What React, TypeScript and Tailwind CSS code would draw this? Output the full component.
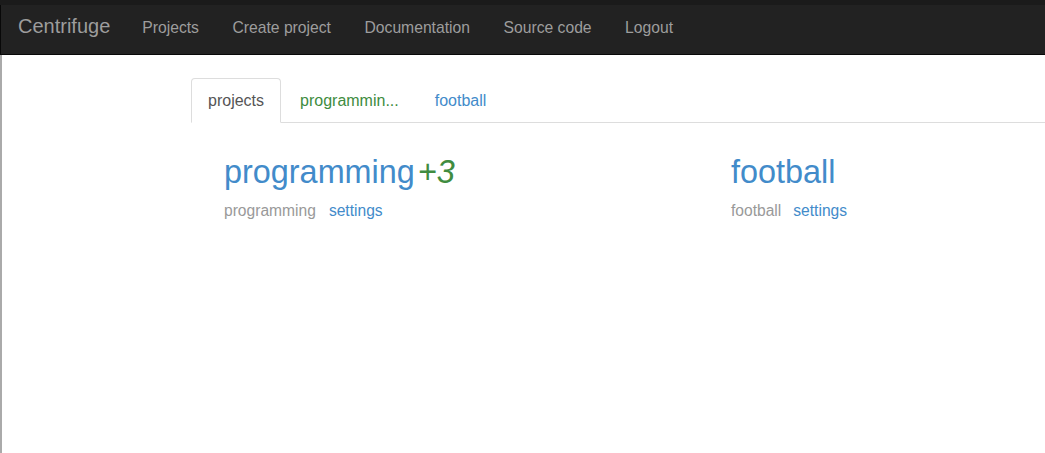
import React from "react";

const font = { fontFamily: '"Liberation Sans", Arial, sans-serif' };

export default function App() {
  const links = ["Projects", "Create project", "Documentation", "Source code", "Logout"];
  return (
    <div className="min-h-[453px] bg-white" style={font}>
      <div className="h-[5px] bg-[#1b1b1b]" />
      <nav className="flex h-[50px] items-baseline border-b border-l border-[#080808] bg-[#222222] pt-[11px] pl-[17px]">
        <a className="text-[20px] leading-[20px] text-[#9d9d9d]">Centrifuge</a>
        <div className="ml-[32px] flex items-baseline gap-[33.5px]">
          {links.map((l) => (
            <a key={l} className="text-[15.7px] leading-[20px] text-[#9d9d9d]">
              {l}
            </a>
          ))}
        </div>
      </nav>
      <div className="min-h-[398px] border-l-2 border-[#aaaaaa] pl-[189px] pt-[23px]">
        <ul className="flex border-b border-[#dddddd]">
          <li className="-mb-px mr-[2px]">
            <a className="block rounded-t-[4px] border border-[#dddddd] border-b-transparent bg-white px-[16px] py-[10px] text-[16px] leading-[23px] text-[#555555]">
              projects
            </a>
          </li>
          <li className="-mb-px mr-[2px]">
            <a className="block rounded-t-[4px] border border-transparent px-[16px] py-[10px] text-[16px] leading-[23px] text-[#408c40]">
              programmin...
            </a>
          </li>
          <li className="-mb-px mr-[2px]">
            <a className="block rounded-t-[4px] border border-transparent px-[16px] py-[10px] text-[16px] leading-[23px] text-[#428bca]">
              football
            </a>
          </li>
        </ul>
        <div className="ml-[33px] grid grid-cols-[507px_1fr] pt-[32px]">
          <div>
            <div className="text-[32.4px] leading-[35px]">
              <span className="text-[#428bca]">programming</span>
              <span className="ml-[3px] italic text-[#408c40]">+3</span>
            </div>
            <div className="mt-[10px] flex gap-[13px] text-[15.6px] leading-[22px]">
              <span className="text-[#999999]">programming</span>
              <span className="text-[#428bca]">settings</span>
            </div>
          </div>
          <div>
            <div className="text-[32.4px] leading-[35px] text-[#428bca]">football</div>
            <div className="mt-[10px] flex gap-[12px] text-[15.6px] leading-[22px]">
              <span className="text-[#999999]">football</span>
              <span className="text-[#428bca]">settings</span>
            </div>
          </div>
        </div>
      </div>
    </div>
  );
}
